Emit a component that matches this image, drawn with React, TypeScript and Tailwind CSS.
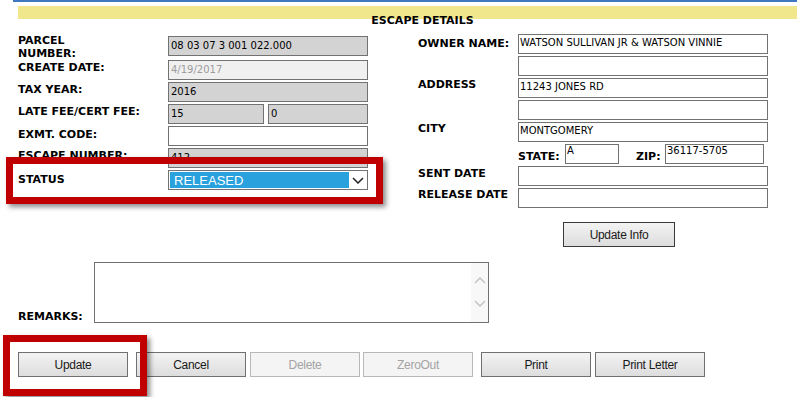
const label = "font-['DejaVu_Sans',sans-serif] text-[11px] font-bold leading-[13px] text-black whitespace-nowrap";
const boxFont = "font-['DejaVu_Sans',sans-serif] text-[10px] leading-[12px] whitespace-nowrap";
const boxText = `${boxFont} text-black`;
const btn =
  "h-[25px] w-[110px] shrink-0 border font-['Liberation_Sans',Arial,sans-serif] text-[12px] tracking-[-0.3px]";
const btnOn = `${btn} border-[#707070] bg-linear-to-b from-[#f3f3f3] to-[#dddddd] text-[#1a1a1a]`;
const btnOff = `${btn} border-[#b8b8b8] bg-[#f4f4f4] text-[#a3a3a3]`;

function LeftBox({ className, text }: { className: string; text?: string }) {
  return (
    <div className={`flex h-[20px] items-center border border-[#727272] pl-[2px] ${className}`}>
      {text && <span className={boxText}>{text}</span>}
    </div>
  );
}

function RightBox({ className, text }: { className: string; text?: string }) {
  return (
    <div className={`h-[20px] border border-[#727272] bg-white pl-[1px] ${className}`}>
      {text && <div className={boxText}>{text}</div>}
    </div>
  );
}

function Chevron({ up, className }: { up?: boolean; className: string }) {
  return (
    <svg width="12" height="7" viewBox="0 0 12 7" className={className}>
      <polyline
        points={up ? "1,6 6,1 11,6" : "1,1 6,6 11,1"}
        fill="none"
        stroke="currentColor"
        strokeWidth="1.5"
      />
    </svg>
  );
}

export default function App() {
  return (
    <div className="relative h-[397px] w-[797px] overflow-hidden bg-white">
      <div className="ml-[13px] h-[2px] bg-[#3f78bf]" />
      <div className="ml-[18px] mt-[4px] h-[13px] bg-[#f0e68c] pl-[30px] text-center">
        <span className={label}>ESCAPE DETAILS</span>
      </div>

      <div className="mt-[15px] flex items-start">
        {/* left column */}
        <div className="ml-[18px] flex w-[350px] flex-col">
          <div className="flex h-[26px]">
            <div className={`${label} w-[150px]`}>
              PARCEL
              <br />
              NUMBER:
            </div>
            <LeftBox className="mt-[2px] w-[200px] bg-[#d3d3d3]" text="08 03 07 3 001 022.000" />
          </div>
          <div className="flex h-[20px]">
            <div className={`${label} w-[150px] pt-[1px]`}>CREATE DATE:</div>
            <div className="flex h-[20px] w-[200px] items-center border border-[#727272] bg-[#f0f0f0] pl-[2px]">
              <span className={`${boxFont} text-[#9c9c9c]`}>4/19/2017</span>
            </div>
          </div>
          <div className="mt-[2px] flex h-[20px]">
            <div className={`${label} w-[150px] pt-[1px]`}>TAX YEAR:</div>
            <LeftBox className="w-[200px] bg-[#d3d3d3]" text="2016" />
          </div>
          <div className="mt-[2px] flex h-[20px]">
            <div className={`${label} w-[150px] pt-[1px]`}>LATE FEE/CERT FEE:</div>
            <LeftBox className="w-[96px] bg-[#d3d3d3]" text="15" />
            <LeftBox className="ml-[4px] w-[100px] bg-[#d3d3d3]" text="0" />
          </div>
          <div className="mt-[2px] flex h-[20px]">
            <div className={`${label} w-[150px] pt-[2px]`}>EXMT. CODE:</div>
            <LeftBox className="w-[200px] bg-white" />
          </div>
          <div className="mt-[2px] flex h-[20px]">
            <div className={`${label} w-[150px] pt-[1px]`}>ESCAPE NUMBER:</div>
            <LeftBox className="w-[200px] bg-[#d3d3d3]" text="412" />
          </div>
          <div className="mt-[2px] flex h-[20px]">
            <div className={`${label} w-[150px] pt-[3px]`}>STATUS</div>
            <div className="flex h-[20px] w-[200px] items-stretch border border-[#727272] bg-white p-px">
              <div className="flex w-[179px] items-center bg-[#28a1dc] pl-[4px] font-['Liberation_Sans',Arial,sans-serif] text-[13px] leading-none text-white">
                RELEASED
              </div>
              <div className="flex flex-1 items-center justify-center text-[#222]">
                <Chevron className="h-[7px] w-[12px]" />
              </div>
            </div>
          </div>
        </div>

        {/* right column */}
        <div className="ml-[50px] flex w-[350px] flex-col gap-[2px]">
          <div className="flex">
            <div className={`${label} w-[100px] pt-[3px]`}>OWNER NAME:</div>
            <RightBox className="w-[250px] pt-[2px]" text="WATSON SULLIVAN JR & WATSON VINNIE" />
          </div>
          <div className="flex">
            <div className="w-[100px]" />
            <RightBox className="w-[250px]" />
          </div>
          <div className="flex">
            <div className={`${label} w-[100px]`}>ADDRESS</div>
            <RightBox className="w-[250px] pt-[2px]" text="11243 JONES RD" />
          </div>
          <div className="flex">
            <div className="w-[100px]" />
            <RightBox className="w-[250px]" />
          </div>
          <div className="flex">
            <div className={`${label} w-[100px]`}>CITY</div>
            <RightBox className="w-[250px] pt-[2px]" text="MONTGOMERY" />
          </div>
          <div className="flex">
            <div className="w-[100px]" />
            <div className={`${label} w-[47px] pt-[6px]`}>STATE:</div>
            <RightBox className="w-[54px]" text="A" />
            <div className={`${label} ml-[17px] w-[29px] pt-[6px]`}>ZIP:</div>
            <RightBox className="w-[99px]" text="36117-5705" />
          </div>
          <div className="flex">
            <div className={`${label} w-[100px] pt-[1px]`}>SENT DATE</div>
            <RightBox className="w-[250px]" />
          </div>
          <div className="flex">
            <div className={`${label} w-[100px]`}>RELEASE DATE</div>
            <RightBox className="w-[250px]" />
          </div>
          <button
            type="button"
            className={`${btn} ml-[145px] mt-[12px] w-[112px] border-[#3a3a3a] bg-linear-to-b from-[#f3f3f3] to-[#dddddd] text-[#1a1a1a]`}
          >
            Update Info
          </button>
        </div>
      </div>

      {/* remarks */}
      <div className="mt-[15px] flex items-end">
        <div className={`${label} ml-[18px] w-[76px]`}>REMARKS:</div>
        <div className="flex h-[61px] w-[395px] justify-end border border-[#727272] bg-white">
          <div className="flex w-[17px] flex-col items-center bg-[#f8f8f8] text-[#c4c4c4]">
            <Chevron up className="mt-[14px]" />
            <Chevron className="mt-[16px]" />
          </div>
        </div>
      </div>

      {/* buttons */}
      <div className="ml-[18px] mt-[29px] flex">
        <button type="button" className={btnOn}>Update</button>
        <button type="button" className={`${btnOn} ml-[8px]`}>Cancel</button>
        <button type="button" disabled className={`${btnOff} ml-[4px]`}>Delete</button>
        <button type="button" disabled className={`${btnOff} ml-[3px]`}>ZeroOut</button>
        <button type="button" className={`${btnOn} ml-[8px]`}>Print</button>
        <button type="button" className={`${btnOn} ml-[4px]`}>Print Letter</button>
      </div>

      {/* annotation highlights */}
      <div className="pointer-events-none absolute left-[6px] top-[157px] h-[47px] w-[377px] border-[7px] border-[#c00000] shadow-[3px_3px_5px_rgba(0,0,0,0.45)]" />
      <div className="pointer-events-none absolute left-[3px] top-[335px] h-[61px] w-[144px] border-[7px] border-[#c00000] shadow-[3px_3px_5px_rgba(0,0,0,0.45)]" />
    </div>
  );
}
